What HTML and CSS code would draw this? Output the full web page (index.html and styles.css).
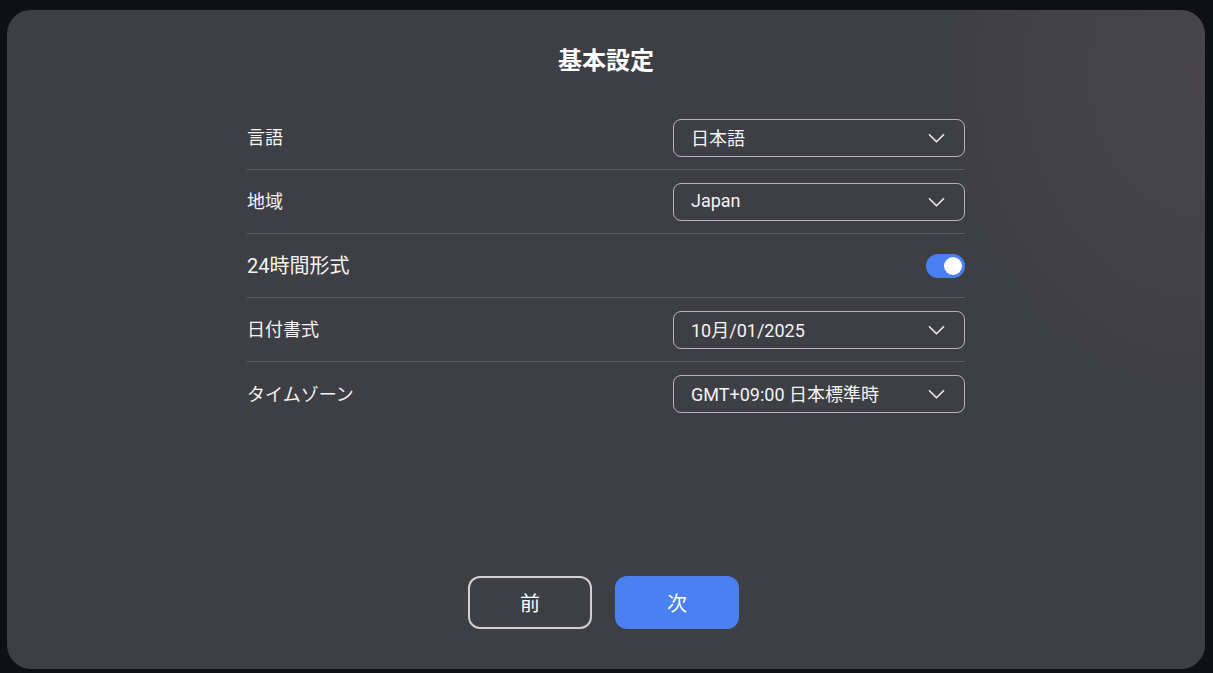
FILE: index.html
```html
<!DOCTYPE html>
<html lang="ja">
<head>
    <meta charset="UTF-8">
    <meta name="viewport" content="width=device-width, initial-scale=1.0">
    <title>基本設定</title>
    <link rel="stylesheet" href="styles.css">
</head>
<body>
    <div class="panel">
        <h1 class="title">基本設定</h1>

        <div class="settings">
            <div class="row">
                <span class="label">言語</span>
                <div class="select">
                    <span class="value">日本語</span>
                    <svg class="chevron" viewBox="0 0 18 10"><path d="M1 1l8 8 8-8"/></svg>
                </div>
            </div>
            <div class="row">
                <span class="label">地域</span>
                <div class="select">
                    <span class="value">Japan</span>
                    <svg class="chevron" viewBox="0 0 18 10"><path d="M1 1l8 8 8-8"/></svg>
                </div>
            </div>
            <div class="row">
                <span class="label label-lg">24時間形式</span>
                <div class="toggle on"><div class="knob"></div></div>
            </div>
            <div class="row">
                <span class="label">日付書式</span>
                <div class="select">
                    <span class="value">10月/01/2025</span>
                    <svg class="chevron" viewBox="0 0 18 10"><path d="M1 1l8 8 8-8"/></svg>
                </div>
            </div>
            <div class="row">
                <span class="label">タイムゾーン</span>
                <div class="select">
                    <span class="value">GMT+09:00 日本標準時</span>
                    <svg class="chevron" viewBox="0 0 18 10"><path d="M1 1l8 8 8-8"/></svg>
                </div>
            </div>
        </div>

        <div class="actions">
            <button class="btn btn-prev">前</button>
            <button class="btn btn-next">次</button>
        </div>
    </div>
</body>
</html>
```

FILE: styles.css
```css
html, body {
    height: 100%;
}
body {
    margin: 0;
    background-color: #0f0f18;
    font-family: Roboto, "Noto Sans CJK JP", sans-serif;
    color: #f4f4f4;
    overflow: hidden;
}
.panel {
    box-sizing: border-box;
    margin: 10px 8px 0 7px;
    height: 659px;
    border-radius: 24px;
    background-color: #3e3f45;
    background-image: radial-gradient(ellipse 260px 320px at 100% 10%, rgba(90, 82, 88, 0.35), rgba(62, 63, 69, 0));
    display: flex;
    flex-direction: column;
    align-items: center;
    padding: 35px 0 40px;
}
.title {
    margin: 0;
    font-size: 24px;
    line-height: 32px;
    font-weight: bold;
    color: #fff;
}
.settings {
    width: 718px;
    margin-top: 29px;
}
.row {
    box-sizing: border-box;
    height: 64px;
    display: flex;
    align-items: center;
    justify-content: space-between;
    border-bottom: 1px solid #5b5c61;
}
.row:last-child {
    border-bottom: none;
}
.label {
    font-size: 18px;
    margin-top: -3px;
}
.label-lg {
    font-size: 20px;
}
.select {
    box-sizing: border-box;
    width: 292px;
    height: 38px;
    border: 1px solid #b4b4b8;
    border-radius: 8px;
    display: flex;
    align-items: center;
    justify-content: space-between;
    padding: 0 18px 0 17px;
    font-size: 18px;
}
.value {
    margin-top: -2px;
}
.chevron {
    width: 17px;
    height: 10px;
    margin-right: 1px;
    fill: none;
    stroke: #f0f0f0;
    stroke-width: 1.6;
}
.toggle {
    box-sizing: border-box;
    width: 39px;
    height: 24px;
    border-radius: 12px;
    background-color: #4a7ff0;
    padding: 3px;
    display: flex;
    justify-content: flex-end;
}
.knob {
    width: 18px;
    height: 18px;
    border-radius: 50%;
    background-color: #fff;
}
.actions {
    margin-top: auto;
    display: flex;
    gap: 23px;
    margin-right: 5px;
}
.btn {
    box-sizing: border-box;
    width: 124px;
    height: 53px;
    border-radius: 12px;
    font-family: Roboto, "Noto Sans CJK JP", sans-serif;
    font-size: 20px;
    color: #fff;
    cursor: pointer;
}
.btn-prev {
    background: transparent;
    border: 2px solid #d0d0d0;
}
.btn-next {
    background-color: #4a80f0;
    border: none;
}
```
